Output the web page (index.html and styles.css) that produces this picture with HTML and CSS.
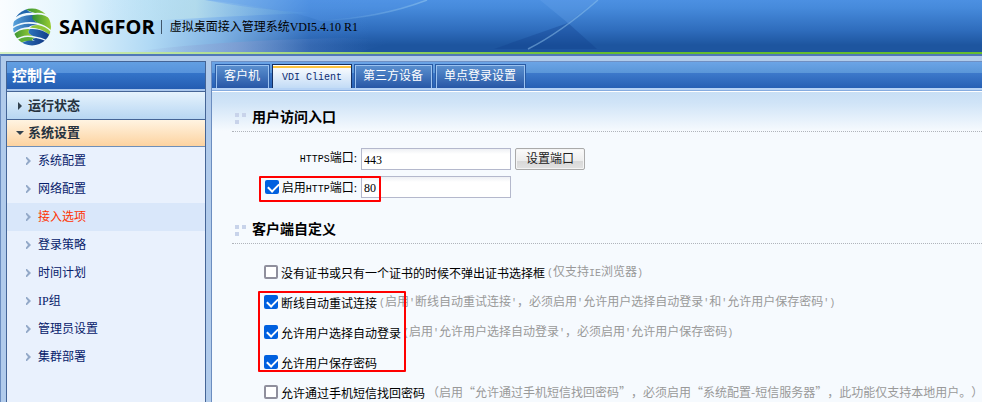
FILE: index.html
```html
<!DOCTYPE html>
<html lang="zh-CN">
<head>
    <meta charset="UTF-8">
    <meta name="viewport" content="width=device-width, initial-scale=1.0">
    <title>虚拟桌面接入管理系统</title>
    <link rel="stylesheet" href="styles.css">
</head>
<body>
    <header class="header">
        <svg class="header-art" width="982" height="52" viewBox="0 0 982 52" aria-hidden="true">
            <defs>
                <linearGradient id="wedge" x1="0" x2="1">
                    <stop offset="0" stop-color="#d4eef0" stop-opacity="0"/>
                    <stop offset="0.45" stop-color="#c4e8ea" stop-opacity="0.6"/>
                    <stop offset="1" stop-color="#4f96dc" stop-opacity="0.3"/>
                </linearGradient>
                <linearGradient id="ray" x1="0" x2="1">
                    <stop offset="0" stop-color="#8fc4ee" stop-opacity="0"/>
                    <stop offset="1" stop-color="#8fc4ee" stop-opacity="0.6"/>
                </linearGradient>
                <linearGradient id="haze" x1="0" x2="1">
                    <stop offset="0" stop-color="#8a9cd0" stop-opacity="0"/>
                    <stop offset="0.4" stop-color="#8a9cd0" stop-opacity="0.5"/>
                    <stop offset="1" stop-color="#2a62b4" stop-opacity="0"/>
                </linearGradient>
            </defs>
            <path d="M100 0H205Q250 9 312 13Q220 16 100 24Z" fill="url(#wedge)"/>
            <path d="M205 0H425Q375 19 320 21Q290 9 205 0Z" fill="#5a9cea" fill-opacity="0.25"/>
            <path d="M130 52Q220 40 345 38L395 41L360 52Z" fill="url(#haze)"/>
            <path d="M320 21Q380 18 427 0" fill="none" stroke="url(#ray)" stroke-width="1.5"/>
            <path d="M540 0H597L568 23Z" fill="#6aa6ea" fill-opacity="0.3"/>
            <path d="M494 49L568 23L597 49Z" fill="#123f8c" fill-opacity="0.35"/>
            <path d="M528 49Q560 33 598 0" fill="none" stroke="#8fc4ee" stroke-opacity="0.5" stroke-width="1.5"/>
        </svg>
        <svg class="logo" width="40" height="40" viewBox="0 0 40 40" role="img" aria-label="SANGFOR">
            <defs>
                <clipPath id="ball"><ellipse cx="20" cy="20" rx="19" ry="18.5"/></clipPath>
                <linearGradient id="lime" x1="0" x2="1">
                    <stop offset="0" stop-color="#2f8f35"/>
                    <stop offset="1" stop-color="#a0d032"/>
                </linearGradient>
                <linearGradient id="blue" x1="0" x2="1">
                    <stop offset="0" stop-color="#5ba6de"/>
                    <stop offset="1" stop-color="#1a559f"/>
                </linearGradient>
                <linearGradient id="navy" x1="0" x2="1">
                    <stop offset="0" stop-color="#2c74bd"/>
                    <stop offset="1" stop-color="#0f3580"/>
                </linearGradient>
            </defs>
            <g clip-path="url(#ball)">
                <rect width="40" height="40" fill="#eef8fd"/>
                <path d="M4 10Q12 5 21 6Q14 4 14 0H0Z" fill="#2166ac"/>
                <path d="M12 0H40V10Q32 5 23 6Q15 4 12 0Z" fill="url(#lime)"/>
                <path d="M1 15Q10 7 22 8Q19 12 26 16Q12 13 0 20Z" fill="url(#blue)"/>
                <path d="M21 8Q33 6 40 14V24Q34 18 26 16Q18 12 21 8Z" fill="url(#lime)"/>
                <path d="M0 22Q11 14 26 18Q18 18 17 20Q8 20 0 27Z" fill="url(#blue)"/>
                <path d="M26 18Q35 20 40 26V30Q31 21 18 20.500Q20 18 26 18Z" fill="#8fc63a"/>
                <path d="M0 29Q7 21 18 22Q14 26 21 29Q10 27 3 33Z" fill="url(#lime)"/>
                <path d="M18 22Q31 21 40 30L37 34Q29 30 21 29Q14 26 18 22Z" fill="url(#navy)"/>
                <path d="M4 34Q12 28 23 31Q18 32 22 35Q13 32 8 37Z" fill="#5dae39"/>
                <path d="M8 37Q15 32 23 34Q18 32 24 31Q30 32 36 35L30 40H8Z" fill="url(#navy)"/>
            </g>
        </svg>
        <strong class="brand">SANGFOR</strong>
        <span class="product">虚拟桌面接入管理系统VDI5.4.10 R1</span>
    </header>

    <div class="frame">
        <nav class="sidebar">
            <h1 class="sidebar-title">控制台</h1>
            <a class="group" href="#status">
                <svg width="8" height="8" viewBox="0 0 8 8"><path d="M2 0L6 4L2 8Z" fill="#33424f"/></svg>
                运行状态
            </a>
            <a class="group open" href="#system">
                <svg width="8" height="8" viewBox="0 0 8 8"><path d="M0 2H8L4 6Z" fill="#33424f"/></svg>
                系统设置
            </a>
            <ul class="menu">
                <li><a href="#config">系统配置</a></li>
                <li><a href="#network">网络配置</a></li>
                <li><a class="current" href="#access">接入选项</a></li>
                <li><a href="#login">登录策略</a></li>
                <li><a href="#schedule">时间计划</a></li>
                <li><a href="#ip">IP组</a></li>
                <li><a href="#admin">管理员设置</a></li>
                <li><a href="#cluster">集群部署</a></li>
            </ul>
        </nav>

        <main class="panel">
            <div class="tabs">
                <a class="tab" href="#client">客户机</a>
                <a class="tab active" href="#vdi"><span class="mono">VDI Client</span></a>
                <a class="tab" href="#device">第三方设备</a>
                <a class="tab" href="#sso">单点登录设置</a>
            </div>

            <form class="content">
                <h2 class="section">用户访问入口</h2>
                <div class="ports">
                    <div class="port-row">
                        <label class="port-label" for="https"><span><span class="mono">HTTPS</span>端口:</span></label>
                        <input class="text" id="https" type="text" value="443">
                        <button class="button" type="button">设置端口</button>
                    </div>
                    <div class="port-row">
                        <div class="port-label">
                            <input class="check" id="httpOn" type="checkbox" checked>
                            <label for="httpOn">启用<span class="mono">HTTP</span>端口:</label>
                        </div>
                        <input class="text" type="text" value="80" aria-label="HTTP端口">
                        <span class="mark mark-port"></span>
                    </div>
                </div>

                <h2 class="section">客户端自定义</h2>
                <div class="options">
                    <div class="option">
                        <input class="check" id="cert" type="checkbox">
                        <label for="cert">没有证书或只有一个证书的时候不弹出证书选择框</label>
                        <span class="hint"><span class="mono">(</span>仅支持<span class="mono">IE</span>浏览器<span class="mono">)</span></span>
                    </div>
                    <div class="option">
                        <input class="check" id="retry" type="checkbox" checked>
                        <label for="retry">断线自动重试连接</label>
                        <span class="hint"><span class="mono">(</span>启用<span class="mono">'</span>断线自动重试连接<span class="mono">'</span>，必须启用<span class="mono">'</span>允许用户选择自动登录<span class="mono">'</span>和<span class="mono">'</span>允许用户保存密码<span class="mono">')</span></span>
                    </div>
                    <div class="option">
                        <input class="check" id="auto" type="checkbox" checked>
                        <label for="auto">允许用户选择自动登录</label>
                        <span class="hint"><span class="mono">(</span>启用<span class="mono">'</span>允许用户选择自动登录<span class="mono">'</span>，必须启用<span class="mono">'</span>允许用户保存密码<span class="mono">)</span></span>
                    </div>
                    <div class="option">
                        <input class="check" id="save" type="checkbox" checked>
                        <label for="save">允许用户保存密码</label>
                    </div>
                    <div class="option">
                        <input class="check" id="sms" type="checkbox">
                        <label for="sms">允许通过手机短信找回密码</label>
                        <span class="hint">（启用“允许通过手机短信找回密码”，必须启用“系统配置-短信服务器”，此功能仅支持本地用户。<span class="half">）</span></span>
                    </div>
                    <span class="mark mark-options"></span>
                </div>
            </form>
        </main>
    </div>
</body>
</html>
```
FILE: styles.css
```css
* {
    box-sizing: border-box;
}
body {
    margin: 0;
    min-height: 100vh;
    display: flex;
    flex-direction: column;
    overflow: hidden;
    font-family: "Liberation Serif", "Noto Sans CJK SC", serif;
    font-size: 12px;
    line-height: 16px;
    color: #000;
    white-space: nowrap;
    text-spacing-trim: space-all;
}
a {
    color: inherit;
    text-decoration: none;
}
.mono {
    font-family: "Liberation Mono", monospace;
    font-size: 10px;
}
.half {
    font-feature-settings: "halt";
}

/* header */
.header {
    position: relative;
    height: 54px;
    display: flex;
    align-items: center;
    padding-left: 12px;
    background:
        linear-gradient(to right, #d6f0c4, #a4d880 300px, #66bd2e 600px) bottom / 100% 2px no-repeat,
        linear-gradient(to right, #fafdff, #e4f5fd 70px, rgba(184, 224, 249, 0.95) 150px, rgba(150, 198, 240, 0.8) 220px, rgba(80, 140, 220, 0.2) 310px, transparent 370px),
        linear-gradient(#4c90e2, #468adb 8px, #2f6dbd 30px, #1d559f 45px);
}
.header-art {
    position: absolute;
    left: 0;
    top: 0;
}
.logo {
    position: relative;
}
.brand {
    position: relative;
    margin-left: 7px;
    font-family: "Open Sans", sans-serif;
    font-size: 20px;
}
.product {
    position: relative;
    margin-left: 6px;
    padding-left: 8px;
    line-height: 14px;
    border-left: 1px solid #40566c;
}

/* frame */
.frame {
    flex: 1;
    display: flex;
    gap: 5px;
    padding: 5px 0 0 5px;
    border-top: 2px solid #5078b8;
    border-left: 1px solid #6b8dc0;
    background: #b1cbeb;
}
.sidebar {
    width: 200px;
    border: 1px solid #456596;
    border-bottom: 0;
    background: #e9f1fd;
}
.sidebar-title {
    margin: 0;
    height: 29px;
    padding-left: 5px;
    font-size: 15px;
    line-height: 29px;
    color: #fff;
    background: linear-gradient(#639fe2, #5793db 11px, #3474c9 11px, #245db2);
    border-bottom: 2px solid #a9c6ec;
}
.group {
    display: flex;
    align-items: center;
    gap: 4px;
    height: 28px;
    padding-left: 9px;
    font-size: 13px;
    font-weight: bold;
    color: #26323e;
    border-top: 1px solid #456596;
    background: linear-gradient(#e6f3fd, #b7d6f2);
}
.group.open {
    background: linear-gradient(#fff4e2, #fdd3a0);
    border-bottom: 1px solid #6f8fb8;
}
.menu {
    margin: 0;
    padding: 0;
    list-style: none;
}
.menu a {
    display: flex;
    align-items: center;
    height: 28px;
    padding-left: 19px;
    color: #06206a;
}
.menu a::before {
    content: "";
    width: 5px;
    height: 8px;
    margin-right: 7px;
    background: #93a9c8;
    clip-path: polygon(0 0, 20% 0, 100% 50%, 20% 100%, 0 100%, 0 80%, 40% 50%, 0 20%);
}
.menu .current {
    color: #ff3300;
    background: #d9e7fa;
}

/* tabs */
.panel {
    flex: 1;
    min-width: 0;
    display: flex;
    flex-direction: column;
    border-top: 1px solid #6f8fc2;
    border-left: 1px solid #6b8dc0;
    background: #f6fafe;
}
.tabs {
    display: flex;
    gap: 2px;
    height: 28px;
    padding: 2px 3px 0;
    background: linear-gradient(#6ba4e6, #5a96d8 11px, #3d79cb 11px, #2660b4 26px, #b7d3f5 26px);
}
.tab {
    height: 24px;
    padding: 0 9px 0 8px;
    line-height: 22px;
    color: #fff;
    border: 1px solid #285aa4;
    border-bottom: 0;
    background: linear-gradient(#5c91d0, #2757a6);
    box-shadow: inset 1px 1px #9cc3f0, inset -1px 0 #9cc3f0;
}
.tab.active {
    padding: 0 9px;
    color: #0c2a70;
    border-color: #152f60;
    background: linear-gradient(#fff, #c2dbf6);
    box-shadow: inset 0 1px #fff, inset 0 3px #fdc43c;
}

/* content */
.content {
    flex: 1;
    padding-left: 20px;
    border-top: 1px solid #86acdf;
    background: linear-gradient(#fff 1px, #c8dff5 1px, #d0e4f7 12px, #f6fafe 40px);
    overflow: hidden;
}
.section {
    display: flex;
    align-items: center;
    margin: 0;
    height: 41px;
    padding: 14px 0 0 3px;
    font-size: 14px;
    line-height: 26px;
    border-bottom: 1px dotted #b0b4bb;
}
.section::before {
    content: "";
    width: 11px;
    height: 11px;
    margin-right: 6px;
    background:
        linear-gradient(#c8d3ea, #c8d3ea) 0 0 / 4px 4px no-repeat,
        linear-gradient(#c8d3ea, #c8d3ea) 7px 0 / 4px 4px no-repeat,
        linear-gradient(#c8d3ea, #c8d3ea) 0 7px / 4px 4px no-repeat;
}
.ports {
    display: grid;
    gap: 6px;
    padding: 16px 0 5px;
}
.port-row {
    position: relative;
    display: grid;
    grid-template-columns: 125px 150px 70px;
    gap: 4px;
    align-items: center;
}
.port-label {
    display: flex;
    align-items: center;
    justify-content: flex-end;
}
.port-label label {
    padding-top: 4px;
}
.text {
    height: 22px;
    padding: 2px 2px 0;
    font: inherit;
    border: 1px solid #b4b8cc;
    background: linear-gradient(#eef0f4, #fff 5px);
}
.button {
    height: 22px;
    padding: 0;
    font: inherit;
    color: #222;
    border: 1px solid #aaa;
    border-radius: 2px;
    background: linear-gradient(#fbfbfb, #ececec 60%, #d8d8d8 60%, #e2e2e2);
    box-shadow: inset 0 0 0 1px #f4f4f4;
}
.check {
    appearance: none;
    flex: none;
    width: 14px;
    height: 14px;
    margin: 0 3px 0 0;
    border: 2px solid #8f8f9d;
    border-radius: 2px;
    background: #fff;
}
.check:checked {
    border: 0;
    background: #0060df;
}
.check:checked::before {
    content: "";
    display: block;
    width: 9px;
    height: 5px;
    margin: 3px 0 0 3px;
    border: solid #fff;
    border-width: 0 0 2px 2px;
    transform: rotate(-45deg);
}
.options {
    position: relative;
    padding: 13px 0 0 32px;
}
.option {
    display: flex;
    align-items: center;
    height: 30px;
}
.option label {
    padding-top: 4px;
}
.hint {
    margin-left: 2px;
    font-family: "Noto Sans CJK SC", sans-serif;
    color: #999;
}

/* red callout boxes */
.mark {
    position: absolute;
    border: 2px solid #f00;
    border-radius: 1px;
    pointer-events: none;
}
.mark-port {
    left: 27px;
    top: 0;
    width: 122px;
    height: 26px;
}
.mark-options {
    left: 26px;
    top: 47px;
    width: 148px;
    height: 81px;
}
```
